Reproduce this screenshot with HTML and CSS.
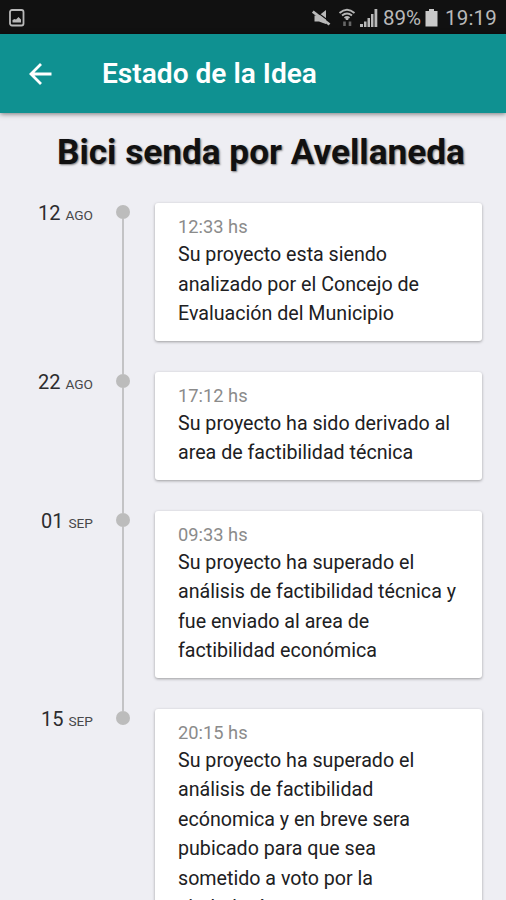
FILE: index.html
```html
<!DOCTYPE html>
<html lang="es">
<head>
<meta charset="utf-8">
<title>Estado de la Idea</title>
<link rel="stylesheet" href="styles.css">
</head>
<body>
<div class="status">
  <svg class="shot" width="18" height="20" viewBox="0 0 18 20"><rect x="2" y="2" width="13.5" height="15.5" rx="2" fill="none" stroke="#b9b9b9" stroke-width="1.8"/><path d="M4.500 14.500V12L6.500 11L8 11.500L10.500 9L13 11.500V14.500Z" fill="#b9b9b9"/></svg>
  <svg class="mute" width="19" height="18" viewBox="0 0 19 18"><path d="M2.500 6.500H7L14 1V15L11 14L7 12.500H2.500Z" fill="#b9b9b9"/><path d="M2 1L19 13.500" stroke="#111" stroke-width="1.2"/><path d="M.8 2.500L17.500 15.500" stroke="#b9b9b9" stroke-width="2.800"/></svg>
  <svg class="wifi" width="18" height="19" viewBox="0 0 18 19" fill="none" stroke="#b5b5b5" stroke-width="1.9"><path d="M1.500 5Q9-1.500 16.500 5M4 7.500Q9 3.500 14 7.500M6.500 10Q9 8 11.500 10"/><path d="M9 9V12" stroke-width="2.500"/><path d="M6.500 13.500V18M12 13.500V18" stroke="#666" stroke-width="2.600"/></svg>
  <svg class="signal" width="18" height="18" viewBox="0 0 18 18" fill="#b9b9b9"><path d="M0 15H3V18H0ZM4 12.500H6.500V18H4ZM7.500 9H10V18H7.500ZM11 5H13.500V18H11ZM14.500 0H17.300V18H14.500Z"/></svg>
  <span class="pct">89%</span>
  <svg class="battery" width="13" height="18" viewBox="0 0 13 18"><path d="M4 0H9V2H12.500V17.500H.5V2H4Z" fill="#c9c9c9"/></svg>
  <span class="clock">19:19</span>
</div>
<header class="bar">
  <svg class="back" width="24" height="24" viewBox="0 0 24 24" fill="none" stroke="#fff" stroke-width="2.800"><path d="M23.500 12H3.500M13 2L3 12L13 22"/></svg>
  <span class="bar-title">Estado de la Idea</span>
</header>
<main>
  <h1>Bici senda por Avellaneda</h1>
  <section class="item">
    <div class="date">12 <small>AGO</small></div>
    <div class="rail"></div>
    <div class="card"><div class="time">12:33 hs</div><p>Su proyecto esta siendo<br>analizado por el Concejo de<br>Evaluación del Municipio</p></div>
  </section>
  <section class="item">
    <div class="date">22 <small>AGO</small></div>
    <div class="rail"></div>
    <div class="card"><div class="time">17:12 hs</div><p>Su proyecto ha sido derivado al<br>area de factibilidad técnica</p></div>
  </section>
  <section class="item">
    <div class="date">01 <small>SEP</small></div>
    <div class="rail"></div>
    <div class="card"><div class="time">09:33 hs</div><p>Su proyecto ha superado el<br>análisis de factibilidad técnica y<br>fue enviado al area de<br>factibilidad económica</p></div>
  </section>
  <section class="item">
    <div class="date">15 <small>SEP</small></div>
    <div class="rail"></div>
    <div class="card"><div class="time">20:15 hs</div><p>Su proyecto ha superado el<br>análisis de factibilidad<br>ecónomica y en breve sera<br>pubicado para que sea<br>sometido a voto por la<br>ciudadanía</p></div>
  </section>
</main>
</body>
</html>
```
FILE: styles.css
```css
* { box-sizing: border-box; }
body {
  margin: 0;
  height: 900px;
  overflow: hidden;
  display: flex;
  flex-direction: column;
  background: #eeeef3;
  color: #202022;
  font-family: Roboto, "Liberation Sans", sans-serif;
}
svg { display: block; flex: none; }
.status {
  flex: none;
  height: 34px;
  display: flex;
  align-items: center;
  padding: 1px 9px 0 8px;
  background: #111;
  color: #b9b9b9;
  font-size: 20.500px;
  line-height: 34px;
  white-space: nowrap;
}
.mute { margin-left: auto; }
.wifi { margin-left: 7px; }
.signal { margin-left: 4px; }
.pct { margin-left: 5px; }
.battery { margin-left: 4px; }
.clock { margin-left: 7px; letter-spacing: .2px; }
.bar {
  flex: none;
  height: 79px;
  display: flex;
  align-items: center;
  padding-left: 28px;
  background: #0f9191;
  color: #fff;
  box-shadow: 0 1px 5px rgba(0, 0, 0, .5);
}
.bar-title {
  margin-left: 50px;
  font-size: 28.100px;
  font-weight: 600;
  white-space: nowrap;
}
main { flex: none; }
h1 {
  margin: 0;
  padding: 17px 0 0 57px;
  height: 90px;
  font-size: 35.200px;
  line-height: 44px;
  font-weight: 700;
  color: #111;
  text-shadow: 1px 1px 2px rgba(0, 0, 0, .5);
  white-space: nowrap;
}
.item {
  display: grid;
  grid-template-columns: 94px 55px 1fr;
  column-gap: 3px;
  padding-right: 24px;
}
.date {
  padding-right: 1px;
  font-size: 20px;
  line-height: 21px;
  text-align: right;
  color: #2c2c2e;
}
.date small { font-size: 13.700px; color: #48484a; }
.rail {
  display: flex;
  flex-direction: column;
  align-items: center;
  width: 52px;
}
.rail::before {
  content: "";
  flex: none;
  width: 14px;
  height: 14px;
  margin-top: 2px;
  border-radius: 50%;
  background: #bcbcbc;
}
.rail::after {
  content: "";
  flex: 1;
  width: 2px;
  margin-bottom: -2px;
  background: #c3c3c5;
}
.item:last-child .rail::after { display: none; }
.card {
  margin-bottom: 30.500px;
  padding: 10px 0 12.500px 23px;
  border-radius: 3px;
  background: #fff;
  box-shadow: 0 1px 3px rgba(0, 0, 0, .35);
}
.time {
  height: 27px;
  color: #8b8b8b;
  font-size: 18.300px;
  line-height: 27px;
}
.card p {
  margin: 0;
  font-size: 19.650px;
  line-height: 29.500px;
  white-space: nowrap;
}
.item:last-child p { line-height: 29.600px; }
```
